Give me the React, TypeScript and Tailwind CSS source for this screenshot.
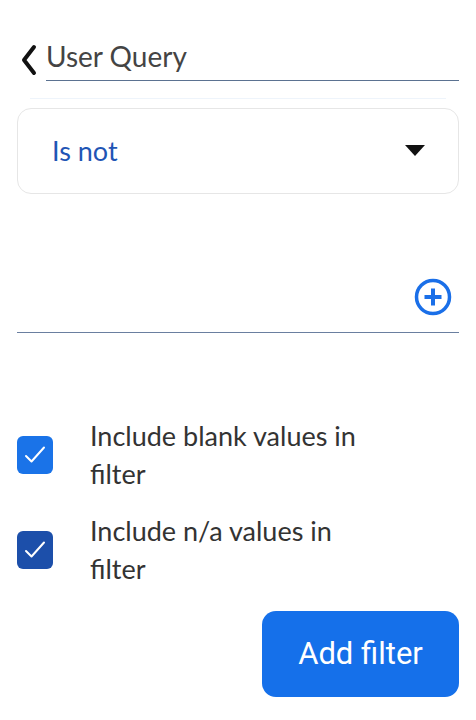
import { useState } from "react";

function ChevronLeft() {
  return (
    <svg width="18" height="32" viewBox="0 0 18 32" fill="none">
      <path d="M14 3 L4 16 L14 29" stroke="#111" strokeWidth="4" strokeLinecap="round" strokeLinejoin="round" />
    </svg>
  );
}

function PlusCircle() {
  return (
    <svg width="38" height="38" viewBox="0 0 38 38" fill="none">
      <circle cx="19" cy="19" r="16.5" stroke="#1a6fe8" strokeWidth="3.5" />
      <path d="M19 10.5 V27.5 M10.5 19 H27.5" stroke="#1a6fe8" strokeWidth="4" />
    </svg>
  );
}

function Check({ checked, color, onToggle }: { checked: boolean; color: string; onToggle: () => void }) {
  return (
    <button
      onClick={onToggle}
      className={`flex h-[38px] w-[36px] shrink-0 items-center justify-center rounded-[6px] ${color}`}
    >
      {checked ? (
        <svg width="24" height="24" viewBox="0 0 24 24" fill="none">
          <path d="M3 13 L8.5 18.5 L21 4.5" stroke="white" strokeWidth="2" strokeLinecap="round" strokeLinejoin="round" />
        </svg>
      ) : null}
    </button>
  );
}

export default function App() {
  const [blank, setBlank] = useState(true);
  const [na, setNa] = useState(true);

  return (
    <div className="flex h-[720px] w-[476px] flex-col bg-white px-[17px] font-['Lato',sans-serif]">
      <header className="mt-[39px] flex items-end">
        <div className="mb-[5px] ml-[3px] w-[26px]">
          <ChevronLeft />
        </div>
        <div className="flex-1 border-b border-[#5b7291] pb-[7px] text-[28px] leading-[34px] text-[#444]">User Query</div>
      </header>
      <div className="mx-[13px] mt-[17px] h-px bg-[#eef4fb]" />

      <div className="mt-[9px] flex h-[86px] items-center justify-between rounded-[14px] border border-[#e6e6e6] pl-[34px] pr-[33px]">
        <span className="text-[27px] text-[#1f55b5]">Is not</span>
        <svg width="20" height="12" viewBox="0 0 20 12">
          <path d="M0 0 H20 L10 11 Z" fill="#111" />
        </svg>
      </div>

      <div className="mt-[84px] flex justify-end border-b border-[#6a7fa0] pb-[16px] pr-[7px]">
        <PlusCircle />
      </div>

      <div className="mt-[84px] flex flex-col gap-[19px]">
        <label className="flex items-center gap-[37px]">
          <Check checked={blank} color="bg-[#1a73e8]" onToggle={() => setBlank(!blank)} />
          <span className="w-[300px] text-[27px] leading-[38px] text-[#333]">Include blank values in filter</span>
        </label>
        <label className="flex items-center gap-[37px]">
          <Check checked={na} color="bg-[#1c4faa]" onToggle={() => setNa(!na)} />
          <span className="w-[300px] text-[27px] leading-[38px] text-[#333]">Include n/a values in filter</span>
        </label>
      </div>

      <div className="mt-[23px] flex justify-end">
        <button className="flex h-[86px] w-[197px] items-center justify-center rounded-[14px] bg-[#1570ea] font-['Roboto',sans-serif] text-[31px] text-white">
          Add filter
        </button>
      </div>
    </div>
  );
}
